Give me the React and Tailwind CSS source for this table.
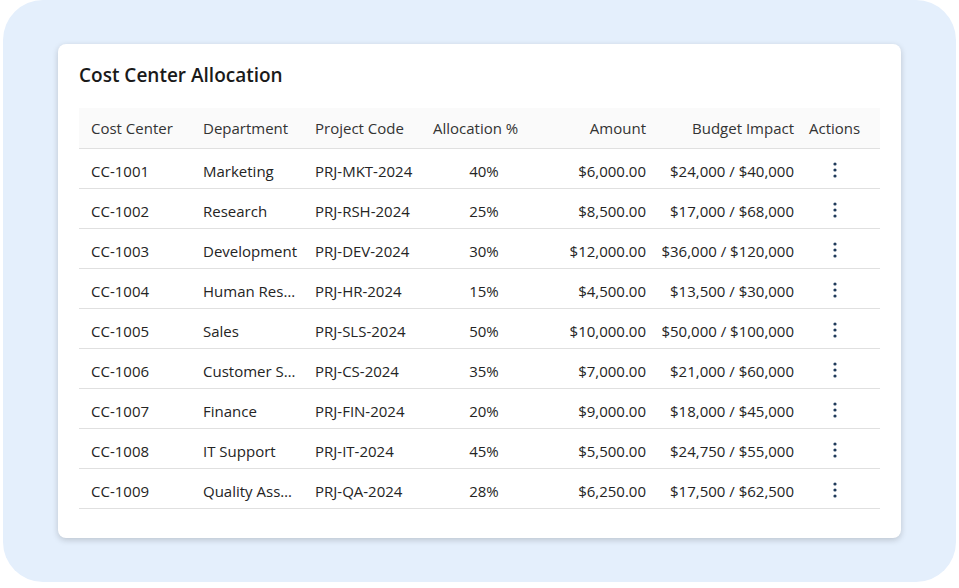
import React from 'react';

const rows = [
    ['CC-1001', 'Marketing', 'PRJ-MKT-2024', '40%', '$6,000.00', '$24,000 / $40,000'],
    ['CC-1002', 'Research', 'PRJ-RSH-2024', '25%', '$8,500.00', '$17,000 / $68,000'],
    ['CC-1003', 'Development', 'PRJ-DEV-2024', '30%', '$12,000.00', '$36,000 / $120,000'],
    ['CC-1004', 'Human Resources', 'PRJ-HR-2024', '15%', '$4,500.00', '$13,500 / $30,000'],
    ['CC-1005', 'Sales', 'PRJ-SLS-2024', '50%', '$10,000.00', '$50,000 / $100,000'],
    ['CC-1006', 'Customer Support', 'PRJ-CS-2024', '35%', '$7,000.00', '$21,000 / $60,000'],
    ['CC-1007', 'Finance', 'PRJ-FIN-2024', '20%', '$9,000.00', '$18,000 / $45,000'],
    ['CC-1008', 'IT Support', 'PRJ-IT-2024', '45%', '$5,500.00', '$24,750 / $55,000'],
    ['CC-1009', 'Quality Assurance', 'PRJ-QA-2024', '28%', '$6,250.00', '$17,500 / $62,500'],
];

const MoreIcon = () => (
    <svg width="4" height="16" viewBox="0 0 4 16" className="text-[#1f3a5a]">
        <circle cx="2" cy="2" r="1.6" fill="currentColor" />
        <circle cx="2" cy="8" r="1.6" fill="currentColor" />
        <circle cx="2" cy="14" r="1.6" fill="currentColor" />
    </svg>
);

export default function App() {
    return (
        <div className="w-[959px] h-[588px] bg-white px-[3px] pb-[6px]" style={{ fontFamily: '"Open Sans", "Noto Sans", sans-serif' }}>
            <div className="h-full rounded-[40px] bg-[#e4effc] pt-[44px] pl-[55px]">
                <div className="w-[843px] h-[494px] bg-white rounded-[8px] shadow-[0_2px_6px_rgba(0,0,0,0.18)] pt-[17px] px-[21px]">
                    <h2 className="text-[19px] font-semibold text-[#1a1a1a] h-[28px] leading-[28px]">Cost Center Allocation</h2>
                    <table className="mt-[19px] w-[801px] table-fixed border-collapse text-[15px] text-[#242424]">
                        <colgroup>
                            <col className="w-[112px]" />
                            <col className="w-[112px]" />
                            <col className="w-[118px]" />
                            <col className="w-[126px]" />
                            <col className="w-[111px]" />
                            <col className="w-[148px]" />
                            <col className="w-[74px]" />
                        </colgroup>
                        <thead>
                            <tr className="h-[40px] bg-[#fafafa] border-b border-[#e0e0e0] text-[#333333]">
                                <th className="pl-3 pt-[1px] text-left font-normal whitespace-nowrap">Cost Center</th>
                                <th className="pl-3 pt-[1px] text-left font-normal whitespace-nowrap">Department</th>
                                <th className="pl-3 pt-[1px] text-left font-normal whitespace-nowrap">Project Code</th>
                                <th className="pl-3 pt-[1px] text-left font-normal whitespace-nowrap">Allocation %</th>
                                <th className="pr-3 pt-[1px] text-right font-normal whitespace-nowrap">Amount</th>
                                <th className="pr-3 pt-[1px] text-right font-normal whitespace-nowrap">Budget Impact</th>
                                <th className="pl-[3px] pt-[1px] text-left font-normal">Actions</th>
                            </tr>
                        </thead>
                        <tbody>
                            {rows.map((r) => (
                                <tr key={r[0]} className="h-[40px] border-b border-[#e0e0e0]">
                                    <td className="pl-3 pr-1 pt-[7px] truncate">{r[0]}</td>
                                    <td className="pl-3 pr-1 pt-[7px] truncate">{r[1]}</td>
                                    <td className="pl-3 pr-1 pt-[7px] truncate">{r[2]}</td>
                                    <td className="px-3 pt-[7px] text-center">{r[3]}</td>
                                    <td className="pr-3 pt-[7px] text-right whitespace-nowrap">{r[4]}</td>
                                    <td className="pr-3 pt-[7px] text-right whitespace-nowrap">{r[5]}</td>
                                    <td className="pr-[16px] pt-[4px]">
                                        <div className="flex justify-center"><MoreIcon /></div>
                                    </td>
                                </tr>
                            ))}
                        </tbody>
                    </table>
                </div>
            </div>
        </div>
    );
}
